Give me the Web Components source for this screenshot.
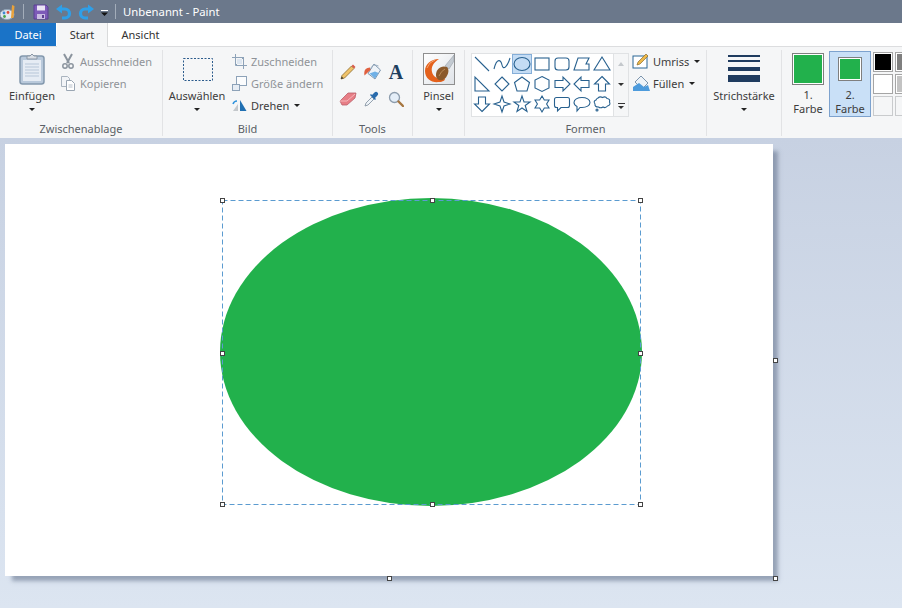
<!DOCTYPE html>
<html lang="de">
<head>
<meta charset="utf-8">
<title>Unbenannt - Paint</title>
<style>
  html, body { margin: 0; height: 100%; overflow: hidden; }
  body { font: 11px "Noto Sans", "Open Sans", sans-serif; color: #3c3c3c; }
</style>
</head>
<body>
<paint-app></paint-app>
<script>
const ICONS = {
  appicon: [16, 16, `<ellipse cx="7" cy="10.500" rx="7" ry="5" fill="#dfe7ef" stroke="#8fa3b7"/><circle cx="4" cy="9" r="1.400" fill="#3f88d0"/><circle cx="8" cy="8.500" r="1.400" fill="#e04b3a"/><circle cx="4.500" cy="12.500" r="1.400" fill="#46a64a"/><path d="M12 1l2.500 1-1 12H11z" fill="#e9a23b"/>`],
  save: [16, 16, `<path d="M1 1h12l2 2v12H1z" fill="#7d5bb8" stroke="#5b4192"/><rect x="4" y="1.500" width="8" height="5" fill="#e9e4f4"/><rect x="4" y="10" width="8" height="5" fill="#c9bce2"/><rect x="9" y="11" width="2" height="3" fill="#5b4192"/>`],
  undo: [16, 16, `<path d="M4 5h5a4 4 0 0 1 0 9H6" fill="none" stroke="#2f9fe8" stroke-width="3.200"/><path d="M0 5l6-4.500v9z" fill="#2f9fe8"/>`],
  redo: [16, 16, `<path d="M12 5H7a4 4 0 0 0 0 9h3" fill="none" stroke="#2f9fe8" stroke-width="3.200"/><path d="M16 5l-6-4.500v9z" fill="#2f9fe8"/>`],
  qat: [7, 6, `<rect width="7" height="1" fill="#fff"/><path d="M0 2.500h7L3.500 6z" fill="#111"/>`],
  paste: [26, 32, `<rect x="1" y="3" width="24" height="28" rx="2.500" fill="#b9c9db" stroke="#8499ae" stroke-width="1.500"/><rect x="4" y="7" width="18" height="21" fill="#e6ecf4"/><path d="M6 11h14M6 14h14M6 17h14M6 20h14M6 23h14" stroke="#b7c6d8"/><path d="M8 6V3h3l2-2 2 2h3v3z" fill="#d9dee5" stroke="#8a97a5"/>`],
  cut: [14, 16, `<path d="M3 1l5 9M11 1L6 10" stroke="#8b949e" stroke-width="2"/><circle cx="4" cy="13" r="2.200" fill="none" stroke="#8b949e" stroke-width="1.500"/><circle cx="10" cy="13" r="2.200" fill="none" stroke="#8b949e" stroke-width="1.500"/>`],
  copy: [16, 16, `<path d="M1.500 1.500h6l2 2v8h-8z" fill="#f2f4f7" stroke="#aab4bf"/><path d="M6.500 5.500h5l3 3v7h-8z" fill="#fff" stroke="#9aa6b3"/><path d="M8.500 10h4M8.500 12h4" stroke="#b6bfc9"/>`],
  select: [30, 23, `<rect x=".5" y=".5" width="29" height="22" fill="none" stroke="#2b5b8c" stroke-dasharray="2 1.500"/>`],
  crop: [15, 15, `<path d="M3.500 0v11.500H15M0 3.500h11.500V15" fill="none" stroke="#8da2b8"/><path d="M4 11l8-8" stroke="#8da2b8"/><rect x="5" y="5" width="5" height="5" fill="#dde6f0"/>`],
  resize: [15, 15, `<rect x="4.500" y=".5" width="10" height="9" fill="#fbfcfd" stroke="#8da2b8"/><rect x=".5" y="8.500" width="7" height="6" fill="#e7edf4" stroke="#8da2b8"/>`],
  rotate: [15, 14, `<path d="M8 13V2l6.500 11z" fill="#1f6fb2"/><path d="M6 13V6L1 13z" fill="#c4c8cc"/><path d="M1 6q1-3 4-3" fill="none" stroke="#2f93dd" stroke-width="1.500"/>`],
  pencil: [16, 16, `<path d="M1 15l1-3.500L11.500 2l2.500 2.500L4.500 14z" fill="#f0c36a" stroke="#8a6a2c" stroke-width=".8"/><path d="M11.500 2L13 .5l2.500 2.500L14 4.500z" fill="#d85a4a"/><path d="M1 15l.7-2.500 1.800 1.800z" fill="#333"/>`],
  bucket: [17, 17, `<path d="M10 1l6.500 6-5.500 9-7-5.500z" fill="#eef3f8" stroke="#7d95ad"/><path d="M5.500 10.500L11 8.500l3.500 1.500-3.500 5.500z" fill="#6fb0e6"/><path d="M6 4.500Q-1 5 .5 12.500 4 9 6.500 7z" fill="#e0603f"/><path d="M6.500 6q2-6 8-3" fill="none" stroke="#9fb1c3"/>`],
  eraser: [18, 14, `<path d="M1 9l8-8h8l-1 5-8 7H3z" fill="#e77e86" stroke="#b9606a" stroke-width=".8"/><path d="M1 9h7l8-7" fill="none" stroke="#f6b7bb"/>`],
  dropper: [16, 16, `<path d="M1 15l1-3 6-6 2 2-6 6z" fill="#eef3f8" stroke="#7d8d9c" stroke-width=".8"/><path d="M8 4l2-2q2-2 3.500-.5T13 5l-2 2 1 1-1 1-5-5 1-1z" fill="#2a6cad"/>`],
  magnify: [16, 16, `<circle cx="6.500" cy="6.500" r="5" fill="#e4eef8" stroke="#8d9dae" stroke-width="1.300"/><path d="M10.500 10.500L15 15" stroke="#a5753f" stroke-width="2.400" stroke-linecap="round"/>`],
  brush: [32, 32, `<defs><linearGradient id="b" x1="0" y1="0" x2="1" y2="1"><stop offset="0" stop-color="#fff"/><stop offset="1" stop-color="#dfe3e8"/></linearGradient></defs><rect x=".5" y=".5" width="31" height="31" fill="url(#b)" stroke="#8f8f8f"/><path d="M16 6C8 6 2 11 2 18c0 8 7 12 14 11 4 0 6-2 6-3-6 1-12-2-13-7-1-5 1-9 7-13z" fill="#e4611c"/><path d="M4 15q2-6 8-8" fill="none" stroke="#f6a36e"/><path d="M31 2L22 13l4 3 5-8z" fill="#c3cad1" stroke="#8d959e" stroke-width=".5"/><path d="M13 22c0-6 5-10 11-8 3 3 1 10-4 13-4 1-7-1-7-5z" fill="#8b5a2b"/><path d="M16 23q2-5 6-7" fill="none" stroke="#b98a56"/>`],
  outline: [18, 16, `<rect x="1" y="3" width="14" height="12" fill="#fff" stroke="#2a6796"/><path d="M5 12l1-3 8-8 2 2-8 8z" fill="#eeb94a" stroke="#8a6a2c" stroke-width=".7"/>`],
  fill: [18, 17, `<path d="M9 1l7 7-6 6-7-7z" fill="#eef3f8" stroke="#7d95ad"/><path d="M1 12l6-4 5 4 4-2 2 6H1z" fill="#4d9bdc"/>`]
};

class PaintIcon extends HTMLElement {
  connectedCallback() {
    const [w, h, body] = ICONS[this.getAttribute("name")];
    this.attachShadow({ mode: "open" }).innerHTML = `
      <style>:host { display: block; width: ${w}px; height: ${h}px; } svg { display: block; }</style>
      <svg width="${w}" height="${h}" viewBox="0 0 ${w} ${h}">${body}</svg>`;
  }
}

class TitleBar extends HTMLElement {
  constructor() {
    super();
    this.attachShadow({ mode: "open" }).innerHTML = `
      <style>
        :host { display: flex; align-items: center; height: 23px; background: #6b788b; color: #fff; font-size: 11.3px; }
        .sep { width: 1px; height: 15px; background: #a3adba; }
        paint-icon { flex: none; }
      </style>
      <paint-icon name="appicon"></paint-icon>
      <div class="sep" style="margin:0 9px 0 7px"></div>
      <paint-icon name="save"></paint-icon>
      <paint-icon name="undo" style="margin-left:7px"></paint-icon>
      <paint-icon name="redo" style="margin-left:6px"></paint-icon>
      <paint-icon name="qat" style="margin:3px 0 0 7px"></paint-icon>
      <div class="sep" style="margin:0 7px"></div>
      <span>Unbenannt - Paint</span>`;
  }
}

class TabStrip extends HTMLElement {
  constructor() {
    super();
    this.attachShadow({ mode: "open" }).innerHTML = `
      <style>
        :host { display: flex; position: relative; height: 23px; background: #fff; color: #333; }
        div { display: flex; align-items: center; justify-content: center; }
        .file { width: 56px; background: #1a73c7; color: #fff; }
        .home { width: 51px; height: 24px; padding-bottom: 1px; box-sizing: border-box; margin-left: 1px; background: #f5f6f7; border-right: 1px solid #d9dadb; }
        .view { width: 65px; }
      </style>
      <div class="file">Datei</div><div class="home">Start</div><div class="view">Ansicht</div>`;
  }
}

class RibbonGroup extends HTMLElement {
  constructor() {
    super();
    this.attachShadow({ mode: "open" }).innerHTML = `
      <style>
        :host { display: flex; flex-direction: column; flex: none; box-sizing: border-box; height: 86px; border-right: 1px solid #e2e3e5; color: #3c3c3c; }
        .body { flex: 1; display: flex; min-height: 0; }
        .label { height: 15px; line-height: 15px; text-align: center; color: #5a5f66; }
      </style>
      <div class="body"><slot></slot></div>
      <div class="label"></div>`;
  }
  connectedCallback() {
    this.style.width = this.getAttribute("w") + "px";
    this.shadowRoot.querySelector(".label").textContent = this.getAttribute("label") || "";
  }
}

class LargeButton extends HTMLElement {
  constructor() {
    super();
    this.attachShadow({ mode: "open" }).innerHTML = `
      <style>
        :host { display: flex; flex-direction: column; align-items: center; flex: none; box-sizing: border-box; padding-top: 3px; }
        .icon { height: 32px; display: flex; align-items: center; margin-bottom: 3px; }
        .text { line-height: 16px; white-space: nowrap; }
        .caret { margin-top: 4px; width: 0; height: 0; border: 3px solid transparent; border-top: 3px solid #222; border-bottom: 0; }
      </style>
      <div class="icon"><slot name="icon"></slot></div>
      <div class="text"><slot></slot></div>
      <div class="caret"></div>`;
  }
}

class SmallButton extends HTMLElement {
  constructor() {
    super();
    this.attachShadow({ mode: "open" }).innerHTML = `
      <style>
        :host { display: flex; align-items: center; gap: 4px; height: 22px; white-space: nowrap; }
        :host([disabled]) { color: #8f9398; }
        .slot { display: flex; align-items: center; justify-content: center; width: 16px; }
        .caret { display: none; margin-left: 1px; width: 0; height: 0; border: 3px solid transparent; border-top: 3px solid #222; border-bottom: 0; }
        :host([menu]) .caret { display: block; }
      </style>
      <div class="slot"><slot name="icon"></slot></div><slot></slot><div class="caret"></div>`;
  }
}

const SHAPES = [
  `<path d="M3 3L17 17"/>`,
  `<path d="M2 15C5 3 9 6 10 11S15 14 18 4"/>`,
  `<ellipse cx="10" cy="10" rx="8" ry="6.500"/>`,
  `<rect x="3" y="4" width="14" height="12"/>`,
  `<rect x="3" y="4" width="14" height="12" rx="3"/>`,
  `<path d="M2 16L6 4H17L14 10H17V16Z"/>`,
  `<path d="M10 3L18 16H2Z"/>`,
  `<path d="M3 3V17H17Z"/>`,
  `<path d="M10 3L17 10L10 17L3 10Z"/>`,
  `<path d="M10 3L17.500 8.500L15 17H5L2.500 8.500Z"/>`,
  `<path d="M10 2.500L17 6V14L10 17.500L3 14V6Z"/>`,
  `<path d="M3 6.500H11V3L18 10L11 17V13.500H3Z"/>`,
  `<path d="M17 6.500H9V3L2 10L9 17V13.500H17Z"/>`,
  `<path d="M10 2.500L17.500 10H13.500V17H6.500V10H2.500Z"/>`,
  `<path d="M10 17.500L17.500 10H13.500V3H6.500V10H2.500Z"/>`,
  `<path d="M10 2L12 8L18 10L12 12L10 18L8 12L2 10L8 8Z"/>`,
  `<path d="M10 2L12 8H18L13.200 11.500L15 17.500L10 14L5 17.500L6.800 11.500L2 8H8Z"/>`,
  `<path d="M10 2L12.300 6H17L14.600 10L17 14H12.300L10 18L7.700 14H3L5.400 10L3 6H7.700Z"/>`,
  `<path d="M4.500 3.500H15.500Q17.500 3.500 17.500 5.500V11.500Q17.500 13.500 15.500 13.500H9L5.500 17V13.500H4.500Q2.500 13.500 2.500 11.500V5.500Q2.500 3.500 4.500 3.500Z"/>`,
  `<path d="M10 3.500C14.500 3.500 18 5.500 18 8.500S14.500 13.500 10 13.500Q8.500 13.500 8 13.500L5 17V12.500C3 11.500 2 10 2 8.500C2 5.500 5.500 3.500 10 3.500Z"/>`,
  `<path d="M6 4Q8 2 10.500 3.500Q13.500 2 15 4.500Q18.500 5 17.500 8Q19 11 15.500 12Q13.500 14.500 11 13Q8.500 14.500 6.500 13Q2.500 13 3 10Q1 7 4 6Q4.500 4.500 6 4Z"/><circle cx="5" cy="16" r="1"/>`
];

class ShapeGallery extends HTMLElement {
  constructor() {
    super();
    const cells = SHAPES.map((s, i) =>
      `<div class="${i === 2 ? "cell on" : "cell"}"><svg width="20" height="20" viewBox="0 0 20 20">${s}</svg></div>`).join("");
    this.attachShadow({ mode: "open" }).innerHTML = `
      <style>
        :host { display: flex; flex: none; height: 62px; border: 1px solid #e0e2e4; background: #fff; }
        .grid { display: grid; grid-template-columns: repeat(7, 20px); grid-auto-rows: 20px; padding: 0 1px 0 0; }
        .cell { box-sizing: border-box; width: 20px; height: 20px; }
        .on { background: #c4dcf4; outline: 1px solid #85aed8; outline-offset: -1px; }
        svg { display: block; fill: none; stroke: #28618f; stroke-width: 1.100; }
        .bar { width: 14px; display: grid; grid-template-rows: repeat(3, 1fr); border-left: 1px solid #e0e2e4; background: #f5f6f7; justify-items: center; align-items: center; }
        .up { border: 3px solid transparent; border-bottom: 4px solid #c4c8cc; border-top: 0; }
        .down { border: 3px solid transparent; border-top: 3px solid #333; border-bottom: 0; }
        .more { width: 7px; border-top: 1px solid #333; padding-top: 2px; }
        .more i { display: block; border: 3.500px solid transparent; border-top: 3px solid #333; border-bottom: 0; width: 0; }
      </style>
      <div class="grid">${cells}</div>
      <div class="bar"><div class="up"></div><div class="down"></div><div class="more"><i></i></div></div>`;
  }
}

class ColorSwatch extends HTMLElement {
  constructor() {
    super();
    this.attachShadow({ mode: "open" }).innerHTML = `
      <style>
        :host { display: block; box-sizing: border-box; width: 20px; height: 20px; border: 1px solid #a5a5a5; padding: 1px; background: #fff; }
        :host([empty]) { background: #f5f6f7; border-color: #c9cbcd; padding: 0; }
        div { height: 100%; }
      </style><div></div>`;
  }
  connectedCallback() {
    this.shadowRoot.querySelector("div").style.background = this.getAttribute("color") || "transparent";
  }
}

class ActiveColor extends HTMLElement {
  constructor() {
    super();
    this.attachShadow({ mode: "open" }).innerHTML = `
      <style>
        :host { display: flex; flex-direction: column; align-items: center; box-sizing: border-box; width: 42px; height: 66px; border: 1px solid transparent; }
        :host([active]) { background: #c9e0f7; border-color: #7da2ce; }
        .area { height: 36px; display: flex; align-items: center; justify-content: center; }
        .box { box-sizing: border-box; border: 1px solid #7f7f7f; padding: 1px; background: #fff; }
        .box div { height: 100%; background: #22b14c; }
        .text { margin-top: 2px; line-height: 14px; text-align: center; }
      </style>
      <div class="area"><div class="box"><div></div></div></div>
      <div class="text"><slot></slot></div>`;
  }
  connectedCallback() {
    const s = this.getAttribute("size") + "px";
    const box = this.shadowRoot.querySelector(".box");
    box.style.width = s;
    box.style.height = s;
  }
}

class PaintRibbon extends HTMLElement {
  constructor() {
    super();
    this.attachShadow({ mode: "open" }).innerHTML = `
      <style>
        :host { display: flex; box-sizing: border-box; height: 92px; padding-top: 3px; background: #f5f6f7; border-top: 1px solid #dcdddf; overflow: hidden; }
        .col { display: flex; flex-direction: column; }
        .tools { display: grid; grid-template-columns: repeat(3, 24px); grid-template-rows: 27px 27px; justify-items: center; align-items: center; margin: 8px 0 0 3px; }
        .letter { font: bold 20px/20px "Liberation Serif", serif; color: #1f3f5f; }
        .lines { display: flex; flex-direction: column; width: 32px; height: 32px; margin-top: 1px; }
        .lines i { display: block; background: #1f3b5f; }
        .colors { display: flex; margin: 1px 0 0 5px; }
        .palette { display: grid; grid-template-columns: repeat(2, 20px); grid-auto-rows: 20px; gap: 2px; margin: 1px 0 0 2px; }
      </style>
      <ribbon-group w="163" label="Zwischenablage">
        <large-button style="width:56px;margin-left:4px"><paint-icon slot="icon" name="paste"></paint-icon>Einfügen</large-button>
        <div class="col">
          <small-button disabled><paint-icon slot="icon" name="cut"></paint-icon>Ausschneiden</small-button>
          <small-button disabled><paint-icon slot="icon" name="copy"></paint-icon>Kopieren</small-button>
        </div>
      </ribbon-group>
      <ribbon-group w="170" label="Bild">
        <large-button style="width:62px;margin-left:3px"><paint-icon slot="icon" name="select" style="margin-left:1px"></paint-icon>Auswählen</large-button>
        <div class="col" style="margin-left:3px">
          <small-button disabled><paint-icon slot="icon" name="crop"></paint-icon>Zuschneiden</small-button>
          <small-button disabled><paint-icon slot="icon" name="resize"></paint-icon>Größe ändern</small-button>
          <small-button menu><paint-icon slot="icon" name="rotate"></paint-icon>Drehen</small-button>
        </div>
      </ribbon-group>
      <ribbon-group w="80" label="Tools">
        <div class="tools">
          <paint-icon name="pencil"></paint-icon><paint-icon name="bucket"></paint-icon><span class="letter">A</span>
          <paint-icon name="eraser"></paint-icon><paint-icon name="dropper"></paint-icon><paint-icon name="magnify"></paint-icon>
        </div>
      </ribbon-group>
      <ribbon-group w="52">
        <large-button style="width:51px"><paint-icon slot="icon" name="brush"></paint-icon>Pinsel</large-button>
      </ribbon-group>
      <ribbon-group w="242" label="Formen">
        <shape-gallery style="margin:3px 0 0 6px"></shape-gallery>
        <div class="col" style="margin-left:4px">
          <small-button menu><paint-icon slot="icon" name="outline"></paint-icon>Umriss</small-button>
          <small-button menu><paint-icon slot="icon" name="fill"></paint-icon>Füllen</small-button>
        </div>
      </ribbon-group>
      <ribbon-group w="75">
        <large-button style="width:74px">
          <div slot="icon" class="lines">
            <i style="height:2px;margin-top:1px"></i><i style="height:2px;margin-top:3px"></i><i style="height:4px;margin-top:5px"></i><i style="height:7px;margin-top:4px"></i>
          </div>Strichstärke</large-button>
      </ribbon-group>
      <div class="colors">
        <active-color size="32">1.<br>Farbe</active-color>
        <active-color size="24" active>2.<br>Farbe</active-color>
        <div class="palette">
          <color-swatch color="#000"></color-swatch><color-swatch color="#7f7f7f"></color-swatch>
          <color-swatch color="#fff"></color-swatch><color-swatch color="#c3c3c3"></color-swatch>
          <color-swatch empty></color-swatch><color-swatch empty></color-swatch>
        </div>
      </div>`;
  }
}

class PaintCanvas extends HTMLElement {
  constructor() {
    super();
    // handle positions are relative to the canvas sheet, free placement
    const place = ([x, y]) => `<b class="h" style="left:${x - 2}px;top:${y - 2}px"></b>`;
    const frame = [[217,56],[427,56],[635,56],[217,209],[635,209],[217,360],[427,360],[635,360]].map(place).join("");
    const sheet = [[770,216],[770,434],[384,434]].map(place).join("");
    this.attachShadow({ mode: "open" }).innerHTML = `
      <style>
        :host { display: block; flex: 1; box-sizing: border-box; padding: 6px 0 0 5px; background: linear-gradient(#c7d1e2, #dce5f1); overflow: hidden; }
        .sheet { position: relative; width: 768px; height: 432px; background: #fff; box-shadow: 6px 6px 4px -1px rgba(95,110,135,.55); }
        .oval { position: absolute; left: 215px; top: 54px; width: 422px; height: 308px; border-radius: 50%; background: #22b14c; }
        .frame { position: absolute; left: 217px; top: 56px; overflow: visible; }
        .frame rect { fill: none; stroke: #5b9bd0; stroke-dasharray: 5 3; }
        .h { position: absolute; box-sizing: border-box; width: 5px; height: 5px; background: #fff; border: 1px solid #444; }
      </style>
      <div class="sheet">
        <div class="oval"></div>
        <svg class="frame" width="419" height="305"><rect x=".5" y=".5" width="418" height="304"/></svg>
        ${frame}
        ${sheet}
      </div>`;
  }
}

class PaintApp extends HTMLElement {
  constructor() {
    super();
    this.attachShadow({ mode: "open" }).innerHTML = `
      <style>:host { display: flex; flex-direction: column; width: 902px; height: 608px; overflow: hidden; }</style>
      <title-bar></title-bar>
      <tab-strip></tab-strip>
      <paint-ribbon></paint-ribbon>
      <paint-canvas></paint-canvas>`;
  }
}

customElements.define("paint-icon", PaintIcon);
customElements.define("title-bar", TitleBar);
customElements.define("tab-strip", TabStrip);
customElements.define("ribbon-group", RibbonGroup);
customElements.define("large-button", LargeButton);
customElements.define("small-button", SmallButton);
customElements.define("shape-gallery", ShapeGallery);
customElements.define("color-swatch", ColorSwatch);
customElements.define("active-color", ActiveColor);
customElements.define("paint-ribbon", PaintRibbon);
customElements.define("paint-canvas", PaintCanvas);
customElements.define("paint-app", PaintApp);
</script>
</body>
</html>
